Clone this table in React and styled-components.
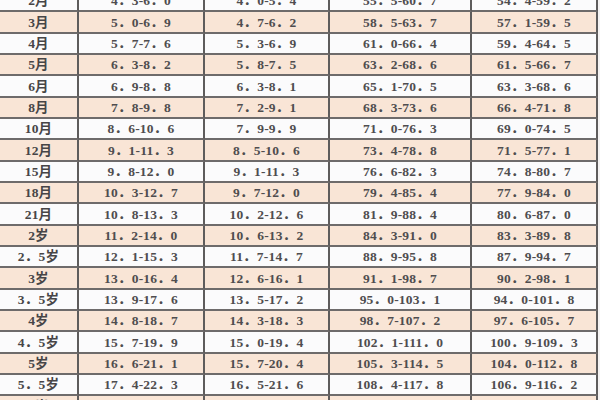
import React from "react";
import styled, { createGlobalStyle } from "styled-components";

const Global = createGlobalStyle`
  html, body { margin: 0; padding: 0; background: #f5f3f3; overflow: hidden; }
  #root { width: 600px; height: 400px; overflow: hidden; }
`;

const Sheet = styled.div`
  margin-top: -9px;
  width: 598px;
  display: flex;
  flex-direction: column;
`;

const Row = styled.div`
  display: grid;
  grid-template-columns: 79px 126px 125px 142px 126px;
  flex: none;
  background: ${(p) => (p.$shade ? "#f9e5d6" : "#fbfbfc")};
`;

const Cell = styled.div`
  box-sizing: border-box;
  border-right: 2px solid #5e5c5c;
  border-bottom: 2px solid #6e6b6b;
  display: flex;
  align-items: center;
  justify-content: center;
  font-family: "Liberation Serif", "Noto Sans CJK SC", serif;
  font-size: 13.5px;
  line-height: 1;
  color: #4f4d4f;
  font-weight: 600;
  white-space: nowrap;
  padding-top: 1px;
  letter-spacing: 0.2px;
`;

const Label = styled(Cell)`
  font-weight: 700;
  color: #474547;
`;

const data = [
  ["2月", "4.3-6.0", "4.0-5.4", "55.5-60.7", "54.4-59.2"],
  ["3月", "5.0-6.9", "4.7-6.2", "58.5-63.7", "57.1-59.5"],
  ["4月", "5.7-7.6", "5.3-6.9", "61.0-66.4", "59.4-64.5"],
  ["5月", "6.3-8.2", "5.8-7.5", "63.2-68.6", "61.5-66.7"],
  ["6月", "6.9-8.8", "6.3-8.1", "65.1-70.5", "63.3-68.6"],
  ["8月", "7.8-9.8", "7.2-9.1", "68.3-73.6", "66.4-71.8"],
  ["10月", "8.6-10.6", "7.9-9.9", "71.0-76.3", "69.0-74.5"],
  ["12月", "9.1-11.3", "8.5-10.6", "73.4-78.8", "71.5-77.1"],
  ["15月", "9.8-12.0", "9.1-11.3", "76.6-82.3", "74.8-80.7"],
  ["18月", "10.3-12.7", "9.7-12.0", "79.4-85.4", "77.9-84.0"],
  ["21月", "10.8-13.3", "10.2-12.6", "81.9-88.4", "80.6-87.0"],
  ["2岁", "11.2-14.0", "10.6-13.2", "84.3-91.0", "83.3-89.8"],
  ["2.5岁", "12.1-15.3", "11.7-14.7", "88.9-95.8", "87.9-94.7"],
  ["3岁", "13.0-16.4", "12.6-16.1", "91.1-98.7", "90.2-98.1"],
  ["3.5岁", "13.9-17.6", "13.5-17.2", "95.0-103.1", "94.0-101.8"],
  ["4岁", "14.8-18.7", "14.3-18.3", "98.7-107.2", "97.6-105.7"],
  ["4.5岁", "15.7-19.9", "15.0-19.4", "102.1-111.0", "100.9-109.3"],
  ["5岁", "16.6-21.1", "15.7-20.4", "105.3-114.5", "104.0-112.8"],
  ["5.5岁", "17.4-22.3", "16.5-21.6", "108.4-117.8", "106.9-116.2"],
  ["6岁", "18.4-23.6", "17.3-22.9", "111.2-121.0", "109.7-119.6"],
];

const PITCH = 21.333;
const heights = data.map(
  (_, k) => Math.round(20 + PITCH * (k + 1)) - Math.round(20 + PITCH * k)
);

const fw = (s) => s.replace(/\./g, "．");

export default function App() {
  return (
    <>
      <Global />
      <Sheet>
        {data.map((r, i) => (
          <Row key={r[0]} $shade={i % 2 === 1} style={{ height: heights[i] }}>
            <Label>{fw(r[0])}</Label>
            {r.slice(1).map((v, j) => (
              <Cell key={j}>{fw(v)}</Cell>
            ))}
          </Row>
        ))}
      </Sheet>
    </>
  );
}
